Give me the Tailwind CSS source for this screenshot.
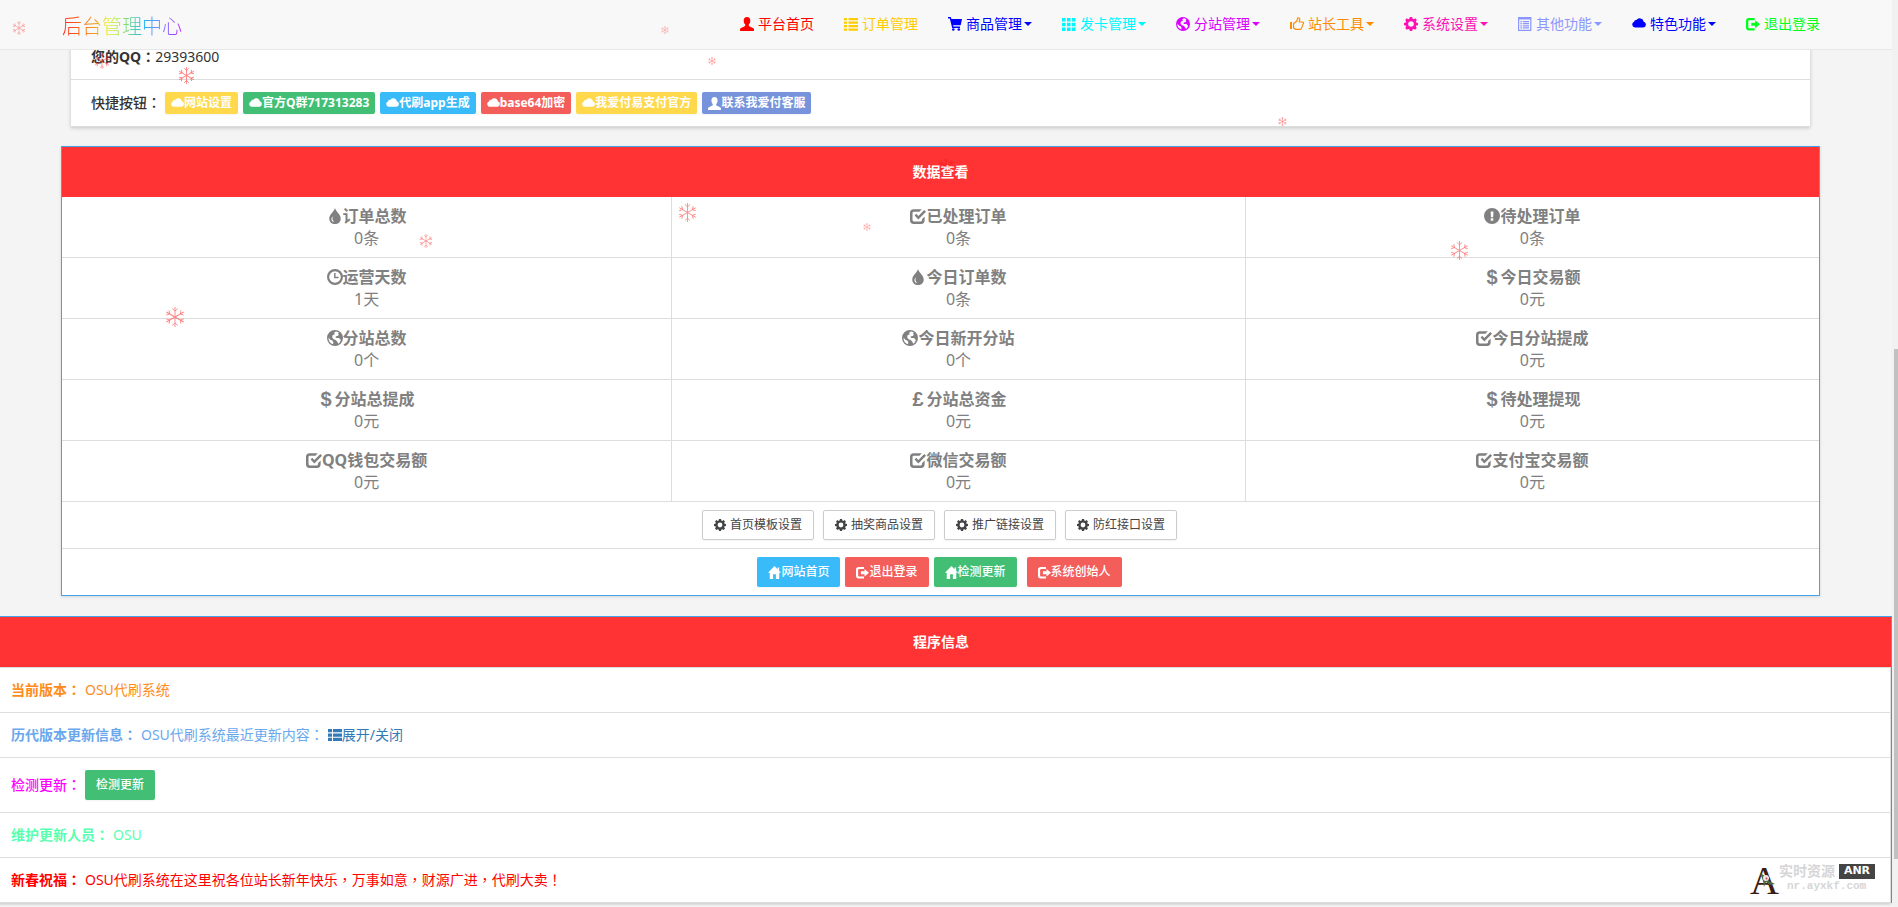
<!DOCTYPE html>
<html lang="zh-CN">
<head>
<meta charset="utf-8">
<meta name="viewport" content="width=device-width, initial-scale=1">
<title>后台管理中心</title>
<script src="https://cdn.jsdelivr.net/npm/@tailwindcss/browser@4"></script>
</head>
<body class="overflow-hidden bg-[#f4f4f4] font-['Noto_Sans','Noto_Sans_CJK_SC',sans-serif] text-sm leading-5 text-[#333]">

<svg class="hidden" aria-hidden="true">
  <symbol id="user" viewBox="0 0 14 14"><path d="M7 0C4.800 0 3.700 1.600 3.700 3.700c0 1.500.6 3 1.500 3.900.2.900-.1 1.500-.9 1.900L1 11.100C.2 11.500 0 12 0 14h14c0-2-.2-2.500-1-2.900L9.700 9.500c-.8-.4-1.100-1-.9-1.900.9-.9 1.500-2.400 1.500-3.900C10.300 1.600 9.200 0 7 0z"/></symbol>
  <symbol id="list" viewBox="0 0 14 14"><path d="M0 1h3v2.300H0zM4.500 1H14v2.300H4.500zM0 4.500h3v2.300H0zM4.500 4.500H14v2.300H4.500zM0 8h3v2.300H0zM4.500 8H14v2.300H4.500zM0 11.500h3v2.300H0zM4.500 11.500H14v2.300H4.500z"/></symbol>
  <symbol id="th-list" viewBox="0 0 14 14"><path d="M0 1h4v3.300H0zM5 1h9v3.300H5zM0 5.400h4v3.300H0zM5 5.400h9v3.300H5zM0 9.800h4v3.300H0zM5 9.800h9v3.300H5z"/></symbol>
  <symbol id="cart" viewBox="0 0 14 14"><path d="M0 0h2.700l.7 2H14l-1.300 6.300H5l.3 1.200H12V11H4.200L1.800 1.500H0z"/><circle cx="5.300" cy="12.500" r="1.300"/><circle cx="10.800" cy="12.500" r="1.300"/></symbol>
  <symbol id="th" viewBox="0 0 14 14"><path d="M0 1h3.600v3.500H0zM5 1h3.600v3.500H5zM10 1h3.600v3.500H10zM0 5.700h3.600v3.500H0zM5 5.700h3.600v3.500H5zM10 5.700h3.600v3.500H10zM0 10.400h3.600v3.500H0zM5 10.400h3.600v3.500H5zM10 10.400h3.600v3.500H10z"/></symbol>
  <symbol id="globe" viewBox="0 0 14 14"><path fill-rule="evenodd" d="M7 0a7 7 0 1 0 0 14A7 7 0 0 0 7 0zm.6 1.300c1 .1 2 .4 2.900 1L9.500 3.200l.9.800-.9 1.200-1.600.2-.5 1 1 .5 2.100 0 1.600 1.800-.9 2.300-1.400 1L9 10.300 7.600 8.800 5.700 8.200 4.500 6.400 5 4.400l2-.6L6.100 2.700zM1.400 6.500l1.500 2 1.700.7 1 1.600-.4 1.600A5.800 5.800 0 0 1 1.400 6.500z"/></symbol>
  <symbol id="thumb" viewBox="0 0 14 14"><path d="M0 5h2v7H0z"/><path fill="none" stroke="currentColor" stroke-width="1.200" stroke-linejoin="round" d="M3.600 6.400 6.600 4.200 8 .8c1.200-.2 1.900.6 1.700 1.800L9.200 5h3.300c.9 0 1.200.9.800 1.600l-2 5c-.2.500-.6.800-1.200.8H6l-2.400-1.200z"/></symbol>
  <symbol id="cog" viewBox="0 0 14 14"><path fill-rule="evenodd" d="M5.800 0h2.400l.4 1.700 1.100.5 1.500-.9 1.600 1.700-.9 1.400.4 1.100 1.700.4v2.300l-1.700.4-.4 1.100.9 1.400-1.600 1.700-1.500-.9-1.100.4L8.200 14H5.800l-.4-1.700-1.100-.4-1.500.9-1.600-1.700.9-1.400-.4-1.100L0 8.200V5.900l1.700-.4.400-1.100L1.200 3l1.600-1.700 1.500.9 1.100-.5zM7 4.200a2.800 2.800 0 1 0 0 5.600 2.800 2.800 0 0 0 0-5.600z"/></symbol>
  <symbol id="list-alt" viewBox="0 0 14 14"><path fill-rule="evenodd" d="M0 0h13.400v14H0zM1.200 2.600v10.200h11V2.600z"/><path d="M2.400 4h1.500v1.200H2.400zM4.800 4H11v1.200H4.800zM2.400 6.100h1.500v1.200H2.400zM4.800 6.100H11v1.200H4.800zM2.400 8.200h1.500v1.200H2.400zM4.800 8.200H11v1.200H4.800zM2.400 10.300h1.500v1.200H2.400zM4.800 10.300H11v1.200H4.800z"/></symbol>
  <symbol id="cloud" viewBox="0 0 14 14"><path d="M3 10.400a2.900 2.900 0 0 1-.9-5.600 2 2 0 0 1 2.300-1.700 4 4 0 0 1 7.300 1.600A2.900 2.900 0 0 1 11.300 10.400z"/></symbol>
  <symbol id="logout" viewBox="0 0 14 14"><path d="M8.600 1H3a3 3 0 0 0-3 3v6.500a3 3 0 0 0 3 3h5.600v-2.200H3.300a1 1 0 0 1-1-1V4.200a1 1 0 0 1 1-1h5.300z"/><path d="M5.300 5.700h3.900V3.300L14 7.200l-4.800 4V8.800H5.300z"/></symbol>
  <symbol id="tint" viewBox="0 0 14 14"><path fill-rule="evenodd" d="M7 0C6.400 3 2 5.500 2 9.300 2 12.100 4.200 14 7 14s5-1.900 5-4.700C12 5.500 7.600 3 7 0zM5.200 7.200c-.9 2-.5 3.600 1.200 5C3.900 12.200 2.900 9.200 5.200 7.200z"/></symbol>
  <symbol id="check" viewBox="0 0 14 14"><path d="M10.300 1H3.200A3.200 3.200 0 0 0 0 4.200v6.600A3.200 3.200 0 0 0 3.200 14h6.400a3.200 3.200 0 0 0 3.200-3.200V7.500l-2.200 2.100v1a1.200 1.200 0 0 1-1.200 1.200h-6a1.200 1.200 0 0 1-1.200-1.200V4.400a1.200 1.200 0 0 1 1.200-1.200h4.900z"/><path d="M4 6.500l1.500-1.400 1.800 1.900 5.200-5.300L14 3.200 7.300 10z"/></symbol>
  <symbol id="alert" viewBox="0 0 14 14"><path fill-rule="evenodd" d="M7 0a7 7 0 1 0 0 14A7 7 0 0 0 7 0zM5.800 3h2.500L8 8H6.100zM5.900 9h2.200v2.200H5.900z"/></symbol>
  <symbol id="clock" viewBox="0 0 14 14"><path fill-rule="evenodd" d="M7 0a7 7 0 1 0 0 14A7 7 0 0 0 7 0zm0 1.900a5.100 5.100 0 1 1 0 10.200A5.100 5.100 0 0 1 7 1.900z"/><path d="M6.200 3.500h1.300v3.300h2.600V8H6.200z"/></symbol>
  <symbol id="home" viewBox="0 0 14 14"><path d="M7 0 0 7.300h1.900V14h3.600V9h3v5h3.600V7.300H14l-2-2.100V1.500h-1.700v2z"/></symbol>
  <symbol id="snow" viewBox="0 0 20 20"><g fill="none" stroke="currentColor" stroke-width="0.900"><path id="arm" d="M10 10V0M7.300 1.500 10 4l2.700-2.500"/><use href="#arm" transform="rotate(60 10 10)"/><use href="#arm" transform="rotate(120 10 10)"/><use href="#arm" transform="rotate(180 10 10)"/><use href="#arm" transform="rotate(240 10 10)"/><use href="#arm" transform="rotate(300 10 10)"/></g></symbol>
</svg>

<div class="relative flex min-h-screen">
  <div class="min-w-0 flex-1 overflow-hidden">

    <header class="relative z-10 border-b border-[#e7e7e7] bg-[#f8f8f8] pr-[57px] pl-[62px]">
      <div class="flex h-[49px] items-center justify-between">
        <a href="#" class="bg-[linear-gradient(to_right,#ff2a1a,#f0a020_28%,#e8f020_38%,#80dc80_54%,#20b8f0_68%,#7090ff_80%,#b020ff)] bg-clip-text pt-1 text-xl leading-6 font-light text-transparent">后台管理中心</a>
        <nav class="pb-0.5">
          <ul class="flex leading-5">
            <li><a href="#" class="flex items-center gap-1 px-[15px] text-[#ff0000]"><svg class="size-3.5 fill-current"><use href="#user"/></svg>平台首页</a></li>
            <li><a href="#" class="flex items-center gap-1 px-[15px] text-[#ffcc00]"><svg class="size-3.5 fill-current"><use href="#list"/></svg>订单管理</a></li>
            <li><a href="#" class="flex items-center gap-1 px-[15px] text-[#0000ff]"><svg class="size-3.5 fill-current"><use href="#cart"/></svg><span class="flex items-center gap-0.5">商品管理<i class="border-x-4 border-t-4 border-x-transparent"></i></span></a></li>
            <li><a href="#" class="flex items-center gap-1 px-[15px] text-[#00f6ff]"><svg class="size-3.5 fill-current"><use href="#th"/></svg><span class="flex items-center gap-0.5">发卡管理<i class="border-x-4 border-t-4 border-x-transparent"></i></span></a></li>
            <li><a href="#" class="flex items-center gap-1 px-[15px] text-[#d900ff]"><svg class="size-3.5 fill-current"><use href="#globe"/></svg><span class="flex items-center gap-0.5">分站管理<i class="border-x-4 border-t-4 border-x-transparent"></i></span></a></li>
            <li><a href="#" class="flex items-center gap-1 px-[15px] text-[#ff8c00]"><svg class="size-3.5 fill-current"><use href="#thumb"/></svg><span class="flex items-center gap-0.5">站长工具<i class="border-x-4 border-t-4 border-x-transparent"></i></span></a></li>
            <li><a href="#" class="flex items-center gap-1 px-[15px] text-[#ff10b4]"><svg class="size-3.5 fill-current"><use href="#cog"/></svg><span class="flex items-center gap-0.5">系统设置<i class="border-x-4 border-t-4 border-x-transparent"></i></span></a></li>
            <li><a href="#" class="flex items-center gap-1 px-[15px] text-[#8c96ff]"><svg class="size-3.5 fill-current"><use href="#list-alt"/></svg><span class="flex items-center gap-0.5">其他功能<i class="border-x-4 border-t-4 border-x-transparent"></i></span></a></li>
            <li><a href="#" class="flex items-center gap-1 px-[15px] text-[#0000ff]"><svg class="size-3.5 fill-current"><use href="#cloud"/></svg><span class="flex items-center gap-0.5">特色功能<i class="border-x-4 border-t-4 border-x-transparent"></i></span></a></li>
            <li><a href="#" class="flex items-center gap-1 px-[15px] text-[#00ff1e]"><svg class="size-3.5 fill-current"><use href="#logout"/></svg>退出登录</a></li>
          </ul>
        </nav>
      </div>
    </header>

    <main>
      <!-- Account card; its first row slides under the navigation bar -->
      <ul class="-mt-[15px] mr-[82px] ml-[71px] bg-white shadow-[0_1px_4px_rgba(0,0,0,0.2)]">
        <li class="border-b border-[#ddd] px-5 py-3"><b class="font-bold">您的QQ<span lang="zh-TW" class="font-['Noto_Sans_CJK_TC',sans-serif] leading-none">：</span></b>29393600</li>
        <li class="flex items-center gap-[5px] border-b border-[#ddd] px-5 py-3">
          <b class="w-[69px] font-medium whitespace-nowrap">快捷按钮<span lang="zh-TW" class="font-['Noto_Sans_CJK_TC',sans-serif] leading-none">：</span></b>
          <a href="#" class="flex h-[22px] items-center rounded-xs bg-[#ffd84c] px-1.5 text-xs font-bold text-white shadow-xs"><svg class="size-[13px] fill-current"><use href="#cloud"/></svg>网站设置</a>
          <a href="#" class="flex h-[22px] items-center rounded-xs bg-[#43bf75] px-1.5 text-xs font-bold text-white shadow-xs"><svg class="size-[13px] fill-current"><use href="#cloud"/></svg>官方Q群717313283</a>
          <a href="#" class="flex h-[22px] items-center rounded-xs bg-[#39bbfa] px-1.5 text-xs font-bold text-white shadow-xs"><svg class="size-[13px] fill-current"><use href="#cloud"/></svg>代刷app生成</a>
          <a href="#" class="flex h-[22px] items-center rounded-xs bg-[#f35e5b] px-1.5 text-xs font-bold text-white shadow-xs"><svg class="size-[13px] fill-current"><use href="#cloud"/></svg>base64加密</a>
          <a href="#" class="flex h-[22px] items-center rounded-xs bg-[#ffd84c] px-1.5 text-xs font-bold text-white shadow-xs"><svg class="size-[13px] fill-current"><use href="#cloud"/></svg>我爱付易支付官方</a>
          <a href="#" class="flex h-[22px] items-center rounded-xs bg-[#7793db] px-1.5 text-xs font-bold text-white shadow-xs"><svg class="size-[13px] fill-current"><use href="#user"/></svg>联系我爱付客服</a>
        </li>
      </ul>

      <section class="mt-[19px] mr-[72px] ml-[61px] border border-[#46a3ea] bg-white shadow-[0_1px_3px_rgba(0,0,0,0.12)]">
        <h2 class="bg-[#ff3333] py-[15px] text-center font-bold text-white">数据查看</h2>
        <table class="w-full table-fixed border-collapse text-center text-base leading-[22px] text-[#808080]">
          <colgroup><col class="w-[34.700%]"><col class="w-[32.650%]"><col></colgroup>
          <tbody>
            <tr class="border-b border-[#ddd]">
              <td class="border-r border-[#ddd] py-2"><div class="flex items-center justify-center font-bold"><svg class="size-4 fill-current"><use href="#tint"/></svg>订单总数</div>0条</td>
              <td class="border-r border-[#ddd] py-2"><div class="flex items-center justify-center font-bold"><svg class="size-4 fill-current"><use href="#check"/></svg>已处理订单</div>0条</td>
              <td class="py-2"><div class="flex items-center justify-center font-bold"><svg class="size-4 fill-current"><use href="#alert"/></svg>待处理订单</div>0条</td>
            </tr>
            <tr class="border-b border-[#ddd]">
              <td class="border-r border-[#ddd] py-2"><div class="flex items-center justify-center font-bold"><svg class="size-4 fill-current"><use href="#clock"/></svg>运营天数</div>1天</td>
              <td class="border-r border-[#ddd] py-2"><div class="flex items-center justify-center font-bold"><svg class="size-4 fill-current"><use href="#tint"/></svg>今日订单数</div>0条</td>
              <td class="py-2"><div class="flex items-center justify-center font-bold"><span class="w-4 pl-0.5 text-left font-['Liberation_Sans',sans-serif] text-xl leading-[22px]">$</span>今日交易额</div>0元</td>
            </tr>
            <tr class="border-b border-[#ddd]">
              <td class="border-r border-[#ddd] py-2"><div class="flex items-center justify-center font-bold"><svg class="size-4 fill-current"><use href="#globe"/></svg>分站总数</div>0个</td>
              <td class="border-r border-[#ddd] py-2"><div class="flex items-center justify-center font-bold"><svg class="size-4 fill-current"><use href="#globe"/></svg>今日新开分站</div>0个</td>
              <td class="py-2"><div class="flex items-center justify-center font-bold"><svg class="size-4 fill-current"><use href="#check"/></svg>今日分站提成</div>0元</td>
            </tr>
            <tr class="border-b border-[#ddd]">
              <td class="border-r border-[#ddd] py-2"><div class="flex items-center justify-center font-bold"><span class="w-4 pl-0.5 text-left font-['Liberation_Sans',sans-serif] text-xl leading-[22px]">$</span>分站总提成</div>0元</td>
              <td class="border-r border-[#ddd] py-2"><div class="flex items-center justify-center font-bold"><span class="w-4 pl-0.5 text-left font-['Liberation_Sans',sans-serif] text-xl leading-[22px]">£</span>分站总资金</div>0元</td>
              <td class="py-2"><div class="flex items-center justify-center font-bold"><span class="w-4 pl-0.5 text-left font-['Liberation_Sans',sans-serif] text-xl leading-[22px]">$</span>待处理提现</div>0元</td>
            </tr>
            <tr class="border-b border-[#ddd]">
              <td class="border-r border-[#ddd] py-2"><div class="flex items-center justify-center font-bold"><svg class="size-4 fill-current"><use href="#check"/></svg>QQ钱包交易额</div>0元</td>
              <td class="border-r border-[#ddd] py-2"><div class="flex items-center justify-center font-bold"><svg class="size-4 fill-current"><use href="#check"/></svg>微信交易额</div>0元</td>
              <td class="py-2"><div class="flex items-center justify-center font-bold"><svg class="size-4 fill-current"><use href="#check"/></svg>支付宝交易额</div>0元</td>
            </tr>
          </tbody>
        </table>
        <div class="flex justify-center gap-[9px] border-b border-[#ddd] py-2 pr-0.5">
          <a href="#" class="flex h-[30px] items-center gap-1 rounded-xs border border-[#ccc] px-[11px] text-xs text-[#444] shadow-xs"><svg class="size-3 fill-current"><use href="#cog"/></svg>首页模板设置</a>
          <a href="#" class="flex h-[30px] items-center gap-1 rounded-xs border border-[#ccc] px-[11px] text-xs text-[#444] shadow-xs"><svg class="size-3 fill-current"><use href="#cog"/></svg>抽奖商品设置</a>
          <a href="#" class="flex h-[30px] items-center gap-1 rounded-xs border border-[#ccc] px-[11px] text-xs text-[#444] shadow-xs"><svg class="size-3 fill-current"><use href="#cog"/></svg>推广链接设置</a>
          <a href="#" class="flex h-[30px] items-center gap-1 rounded-xs border border-[#ccc] px-[11px] text-xs text-[#444] shadow-xs"><svg class="size-3 fill-current"><use href="#cog"/></svg>防红接口设置</a>
        </div>
        <div class="flex justify-center gap-[5px] py-2 pr-0.5">
          <a href="#" class="flex h-[30px] items-center rounded-xs bg-[#39bbfa] px-[11px] text-xs font-medium text-white shadow-xs"><svg class="size-[13px] fill-current"><use href="#home"/></svg>网站首页</a>
          <a href="#" class="flex h-[30px] items-center rounded-xs bg-[#f35e5b] px-[11px] text-xs font-medium text-white shadow-xs"><svg class="size-[13px] fill-current"><use href="#logout"/></svg>退出登录</a>
          <a href="#" class="flex h-[30px] items-center rounded-xs bg-[#43bf75] px-[11px] text-xs font-medium text-white shadow-xs"><svg class="size-[13px] fill-current"><use href="#home"/></svg>检测更新</a>
          <a href="#" class="ml-[5px] flex h-[30px] items-center rounded-xs bg-[#f35e5b] px-[11px] text-xs font-medium text-white shadow-xs"><svg class="size-[13px] fill-current"><use href="#logout"/></svg>系统创始人</a>
        </div>
      </section>

      <section class="mt-5 -ml-[10px] border border-b-0 border-[#46a3ea] bg-white">
        <h2 class="bg-[#ff3333] py-[15px] text-center font-bold text-white">程序信息</h2>
        <ul class="border-t border-r border-[#ddd] shadow-[0_1px_3px_rgba(0,0,0,0.2)]">
          <li class="flex items-center gap-1 border-b border-[#ddd] px-5 py-3 text-[#ff8c1a]"><b class="font-bold">当前版本<span lang="zh-TW" class="font-['Noto_Sans_CJK_TC',sans-serif] leading-none">：</span></b>OSU代刷系统</li>
          <li class="flex items-center gap-1 border-b border-[#ddd] px-5 py-3 text-[#6aa8ee]"><b class="font-bold">历代版本更新信息<span lang="zh-TW" class="font-['Noto_Sans_CJK_TC',sans-serif] leading-none">：</span></b><span>OSU代刷系统最近更新内容<span lang="zh-TW" class="font-['Noto_Sans_CJK_TC',sans-serif] leading-none">：</span></span><a href="#" class="flex items-center text-[#337ab7]"><svg class="size-3.5 fill-current"><use href="#th-list"/></svg>展开/关闭</a></li>
          <li class="flex items-center gap-1 border-b border-[#ddd] px-5 py-3 text-[#ff00ff]"><b class="font-medium">检测更新<span lang="zh-TW" class="font-['Noto_Sans_CJK_TC',sans-serif] leading-none">：</span></b><button type="button" class="h-[30px] rounded-xs bg-[#43bf75] px-[11px] text-xs font-medium text-white shadow-xs">检测更新</button></li>
          <li class="flex items-center gap-1 border-b border-[#ddd] px-5 py-3 text-[#5affaf]"><b class="font-bold">维护更新人员<span lang="zh-TW" class="font-['Noto_Sans_CJK_TC',sans-serif] leading-none">：</span></b>OSU</li>
          <li class="flex items-center gap-1 border-b border-[#ddd] px-5 py-3 text-[#ff0000]"><b class="font-bold">新春祝福<span lang="zh-TW" class="font-['Noto_Sans_CJK_TC',sans-serif] leading-none">：</span></b><span>OSU代刷系统在这里祝各位站长新年快乐<span lang="zh-TW" class="font-['Noto_Sans_CJK_TC',sans-serif] leading-none">，</span>万事如意<span lang="zh-TW" class="font-['Noto_Sans_CJK_TC',sans-serif] leading-none">，</span>财源广进<span lang="zh-TW" class="font-['Noto_Sans_CJK_TC',sans-serif] leading-none">，</span>代刷大卖<span lang="zh-TW" class="font-['Noto_Sans_CJK_TC',sans-serif] leading-none">！</span></span></li>
        </ul>
      </section>
    </main>
  </div>

  <!-- Scroll bar -->
  <div class="flex w-1.5 flex-col items-end bg-[#f1f1f1] pt-[349px]"><div class="h-[510px] w-1 bg-[#c1c1c1]"></div></div>

  <!-- Falling snow -->
  <div class="pointer-events-none absolute inset-0 z-20 text-[#ff3030]" aria-hidden="true">
    <svg class="absolute top-[21px] left-[12px] size-3.5 opacity-50"><use href="#snow"/></svg>
    <svg class="absolute top-[53px] left-[94px] size-4 opacity-60"><use href="#snow"/></svg>
    <svg class="absolute top-[67px] left-[178px] size-[17px] opacity-70"><use href="#snow"/></svg>
    <svg class="absolute top-[26px] left-[661px] size-2 opacity-60"><use href="#snow"/></svg>
    <svg class="absolute top-[57px] left-[708px] size-2 opacity-80"><use href="#snow"/></svg>
    <svg class="absolute top-[117px] left-[1278px] size-[9px] opacity-80"><use href="#snow"/></svg>
    <svg class="absolute top-[203px] left-[678px] size-[19px] opacity-60"><use href="#snow"/></svg>
    <svg class="absolute top-[234px] left-[419px] size-3.5 opacity-60"><use href="#snow"/></svg>
    <svg class="absolute top-[223px] left-[863px] size-2 opacity-70"><use href="#snow"/></svg>
    <svg class="absolute top-[158px] left-[938px] size-4 text-[#ff0000] opacity-40"><use href="#snow"/></svg>
    <svg class="absolute top-[241px] left-[1450px] size-[19px] opacity-60"><use href="#snow"/></svg>
    <svg class="absolute top-[307px] left-[165px] size-5 opacity-60"><use href="#snow"/></svg>
  </div>

  <!-- Site watermark -->
  <div class="absolute right-[23px] bottom-[10px] flex items-end">
    <div class="relative h-9 w-[29px]">
      <span class="absolute top-0 left-0 font-['Liberation_Serif',serif] text-[40px] leading-10 font-normal text-[#3a1d10]">A</span>
      <svg class="absolute top-3 left-2.5 size-4" viewBox="0 0 16 16"><path fill="#4c6b45" d="M0 0l5 3 4 5 6 3-5 1-4-3-2 5-1-6z"/><circle cx="6" cy="5" r="3" fill="#f3e4e4"/><circle cx="6.500" cy="5.500" r="1" fill="#c8485c"/></svg>
    </div>
    <div class="flex flex-col pb-1">
      <div class="flex items-center gap-1">
        <span class="text-sm leading-4 font-bold text-[#d6d6d6]">实时资源</span>
        <span class="flex h-[15px] w-9 items-center justify-center bg-[#444] font-['DejaVu_Sans',sans-serif] text-[11px] font-bold text-white">ANR</span>
      </div>
      <span class="pl-2 font-['Liberation_Mono',monospace] text-[11px] leading-3.5 font-bold text-[#d6d6d6]">nr.ayxkf.com</span>
    </div>
  </div>
</div>
</body>
</html>
